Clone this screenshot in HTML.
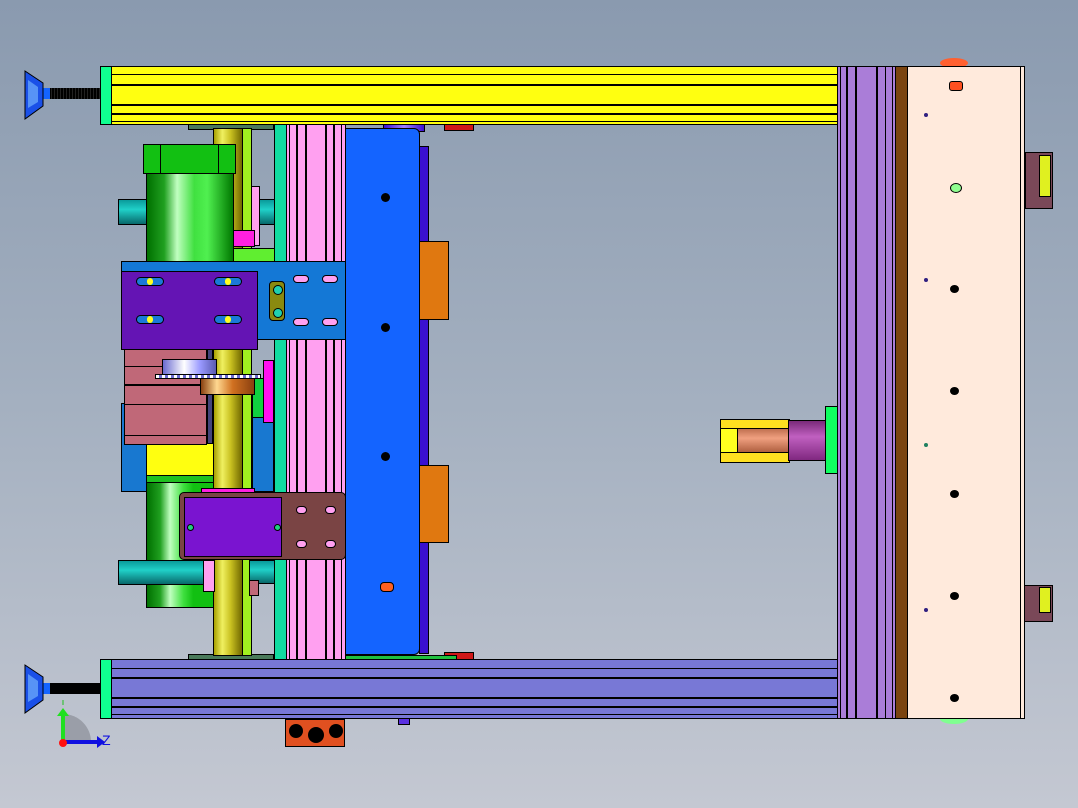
<!DOCTYPE html>
<html><head><meta charset="utf-8">
<style>
html,body{margin:0;padding:0}
body{width:1078px;height:808px;position:relative;overflow:hidden;background:linear-gradient(#8a9aaf 0%,#a4b0c0 50%,#c4c8d2 100%);font-family:"Liberation Sans",sans-serif}
.a{position:absolute;box-sizing:border-box;border:1px solid #000}
.n{position:absolute;box-sizing:border-box}
.h{position:absolute;background:#000;height:2px}
.v{position:absolute;background:#000;width:2px}
.dot{position:absolute;width:9px;height:9px;border-radius:50%;background:#000}
.slot{position:absolute;width:28px;height:9px;border-radius:5px;background:#1a7ad8;border:1px solid #000;box-sizing:border-box}
.slot::after{content:"";position:absolute;left:10px;top:0px;width:6px;height:7px;border-radius:3px;background:#ffff20}
.pslot{position:absolute;width:16px;height:8px;border-radius:4px;background:#ffa0f0;border:1px solid #000;box-sizing:border-box}
</style></head><body>

<div class="a" style="left:188px;top:124px;width:86px;height:6px;background:#4a7a5a"></div>
<div class="a" style="left:188px;top:654px;width:86px;height:6px;background:#4a7a5a"></div>
<div class="a" style="left:213px;top:128px;width:30px;height:528px;background:linear-gradient(90deg,#a8a000,#f0f060 30%,#c8c020 60%,#706800)"></div>
<div class="a" style="left:242px;top:128px;width:10px;height:528px;background:#a0f020"></div>
<div class="a" style="left:251px;top:186px;width:9px;height:60px;background:#ffa0f0"></div>
<div class="a" style="left:233px;top:230px;width:22px;height:17px;background:#ff20e0"></div>
<div class="a" style="left:233px;top:248px;width:42px;height:14px;background:#60ee30"></div>
<div class="a" style="left:259px;top:199px;width:16px;height:26px;background:linear-gradient(#0a9a9a,#20d0c8 40%,#08686a)"></div>
<div class="a" style="left:249px;top:560px;width:26px;height:24px;background:linear-gradient(#0a9a9a,#20d0c8 40%,#08686a)"></div>
<div class="a" style="left:249px;top:580px;width:10px;height:16px;background:#c06878"></div>

<div class="a" style="left:118px;top:199px;width:30px;height:26px;background:linear-gradient(#0a9a9a,#20d0c8 40%,#08686a)"></div>
<div class="a" style="left:146px;top:172px;width:88px;height:92px;background:linear-gradient(90deg,#007000,#20a020 20%,#c0ffc0 35%,#40e040 55%,#50f050 70%,#007800)"></div>
<div class="a" style="left:143px;top:144px;width:93px;height:30px;background:#12c012"></div>
<div class="v" style="left:160px;top:144px;width:1px;height:30px"></div>
<div class="v" style="left:218px;top:144px;width:1px;height:30px"></div>
<div class="a" style="left:146px;top:478px;width:68px;height:130px;background:linear-gradient(90deg,#007000,#20a020 20%,#c0ffc0 35%,#40e040 55%,#12c012 70%)"></div>
<div class="a" style="left:118px;top:560px;width:90px;height:25px;background:linear-gradient(#0a9a9a,#20d0c8 40%,#08686a)"></div>
<div class="a" style="left:203px;top:560px;width:12px;height:32px;background:#ffa0f0"></div>

<div class="a" style="left:121px;top:403px;width:26px;height:89px;background:#1878d0"></div>
<div class="a" style="left:146px;top:438px;width:68px;height:40px;background:#ffff10"></div>
<div class="a" style="left:146px;top:475px;width:68px;height:8px;background:#20c020"></div>
<div class="a" style="left:252px;top:380px;width:22px;height:112px;background:#1878d0"></div>
<div class="a" style="left:252px;top:378px;width:12px;height:40px;background:#10d040"></div>
<div class="a" style="left:124px;top:349px;width:83px;height:96px;background:#c06878"></div>
<div class="h" style="left:124px;top:366px;width:83px;height:1px"></div>
<div class="h" style="left:124px;top:384px;width:83px"></div>
<div class="h" style="left:124px;top:404px;width:83px;height:1px"></div>
<div class="h" style="left:124px;top:435px;width:83px;height:1px"></div>
<div class="a" style="left:207px;top:349px;width:6px;height:95px;background:#44447a"></div>
<div class="a" style="left:162px;top:359px;width:55px;height:18px;background:linear-gradient(90deg,#6a6ad0,#ffffff 40%,#9a9aff 70%,#5a5ab0)"></div>
<div class="a" style="left:155px;top:374px;width:106px;height:5px;background:repeating-linear-gradient(90deg,#fff 0 3px,#6a6ad0 3px 6px)"></div>
<div class="a" style="left:200px;top:378px;width:55px;height:17px;background:linear-gradient(90deg,#8a4010,#ffd890 30%,#d07020 60%,#8a4010)"></div>
<div class="a" style="left:263px;top:360px;width:11px;height:63px;background:#ff10f0"></div>

<div class="a" style="left:274px;top:124px;width:13px;height:536px;background:#12dca0"></div>
<div class="a" style="left:286px;top:124px;width:60px;height:536px;background:#ffa0f0"></div>
<div class="v" style="left:289px;top:124px;width:1px;height:536px"></div>
<div class="v" style="left:296px;top:124px;height:536px"></div>
<div class="v" style="left:305px;top:124px;height:536px"></div>
<div class="v" style="left:325px;top:124px;height:536px"></div>
<div class="v" style="left:333px;top:124px;height:536px"></div>
<div class="v" style="left:341px;top:124px;width:1px;height:536px"></div>

<div class="a" style="left:383px;top:124px;width:42px;height:8px;background:linear-gradient(90deg,#3a10d0,#a080ff,#3a10d0)"></div>
<div class="a" style="left:419px;top:146px;width:10px;height:508px;background:#3a10d0"></div>
<div class="a" style="left:345px;top:128px;width:75px;height:527px;background:#1464ff;border-radius:0 6px 6px 0"></div>
<div class="dot" style="left:381px;top:193px"></div>
<div class="dot" style="left:381px;top:323px"></div>
<div class="dot" style="left:381px;top:452px"></div>
<div style="position:absolute;left:380px;top:582px;width:12px;height:8px;border-radius:4px;background:#ff6020;border:1px solid #000"></div>
<div class="a" style="left:419px;top:241px;width:30px;height:79px;background:#e07810"></div>
<div class="a" style="left:419px;top:465px;width:30px;height:78px;background:#e07810"></div>
<div class="a" style="left:444px;top:124px;width:30px;height:7px;background:#d01818"></div>
<div class="a" style="left:444px;top:652px;width:30px;height:8px;background:#d01818"></div>
<div class="a" style="left:345px;top:655px;width:112px;height:6px;background:#20c040"></div>

<div class="a" style="left:121px;top:261px;width:225px;height:79px;background:#1478d6"></div>
<div class="a" style="left:121px;top:271px;width:137px;height:79px;background:#6414b4"></div>
<div class="slot" style="left:136px;top:277px"></div>
<div class="slot" style="left:214px;top:277px"></div>
<div class="slot" style="left:136px;top:315px"></div>
<div class="slot" style="left:214px;top:315px"></div>
<div class="a" style="left:269px;top:281px;width:16px;height:40px;background:#8a8a10;border-radius:4px"></div>
<div style="position:absolute;left:273px;top:285px;width:8px;height:8px;border-radius:50%;background:#20d0b0;border:1px solid #000"></div>
<div style="position:absolute;left:273px;top:308px;width:8px;height:8px;border-radius:50%;background:#20d0b0;border:1px solid #000"></div>
<div class="pslot" style="left:293px;top:275px"></div>
<div class="pslot" style="left:322px;top:275px"></div>
<div class="pslot" style="left:293px;top:318px"></div>
<div class="pslot" style="left:322px;top:318px"></div>

<div class="a" style="left:201px;top:488px;width:54px;height:5px;background:#ff20e0"></div>
<div class="a" style="left:179px;top:492px;width:167px;height:68px;background:#7a4444;border-radius:5px"></div>
<div class="a" style="left:184px;top:497px;width:98px;height:60px;background:#7a14d0"></div>
<div style="position:absolute;left:187px;top:524px;width:5px;height:5px;border-radius:50%;background:#20d080;border:1px solid #000"></div>
<div style="position:absolute;left:274px;top:524px;width:5px;height:5px;border-radius:50%;background:#20d080;border:1px solid #000"></div>
<div class="pslot" style="left:296px;top:506px;width:11px"></div>
<div class="pslot" style="left:325px;top:506px;width:11px"></div>
<div class="pslot" style="left:296px;top:540px;width:11px"></div>
<div class="pslot" style="left:325px;top:540px;width:11px"></div>

<div class="a" style="left:720px;top:419px;width:70px;height:44px;background:#ffe020"></div>
<div class="a" style="left:720px;top:428px;width:18px;height:25px;background:#ffff20"></div>
<div class="a" style="left:737px;top:428px;width:52px;height:25px;background:linear-gradient(#c07050,#f0a080 40%,#b06040)"></div>
<div class="a" style="left:788px;top:420px;width:38px;height:41px;background:linear-gradient(#7a2a7a,#c060c0 40%,#802880)"></div>
<div class="a" style="left:825px;top:406px;width:13px;height:68px;background:#10ff60"></div>

<div class="a" style="left:100px;top:66px;width:738px;height:59px;background:#ffff10"></div>
<div class="h" style="left:111px;top:74px;width:726px;height:1px"></div>
<div class="h" style="left:111px;top:84px;width:726px"></div>
<div class="h" style="left:111px;top:104px;width:726px"></div>
<div class="h" style="left:111px;top:113px;width:726px"></div>
<div class="h" style="left:111px;top:121px;width:726px;height:1px"></div>
<div class="a" style="left:100px;top:66px;width:12px;height:59px;background:#10ff90"></div>

<div class="a" style="left:100px;top:659px;width:738px;height:60px;background:#7878d6"></div>
<div class="h" style="left:111px;top:668px;width:726px;height:1px"></div>
<div class="h" style="left:111px;top:677px;width:726px"></div>
<div class="h" style="left:111px;top:697px;width:726px"></div>
<div class="h" style="left:111px;top:706px;width:726px"></div>
<div class="h" style="left:111px;top:714px;width:726px;height:1px"></div>
<div class="a" style="left:100px;top:659px;width:12px;height:60px;background:#10ff90"></div>
<div class="a" style="left:398px;top:718px;width:12px;height:7px;background:#5a30e0"></div>

<div class="a" style="left:285px;top:719px;width:60px;height:28px;background:#e05020"></div>
<div style="position:absolute;left:289px;top:724px;width:14px;height:14px;border-radius:50%;background:#000"></div>
<div style="position:absolute;left:308px;top:727px;width:16px;height:16px;border-radius:50%;background:#000"></div>
<div style="position:absolute;left:329px;top:724px;width:14px;height:14px;border-radius:50%;background:#000"></div>

<div class="n" style="left:43px;top:88px;width:58px;height:11px;background:repeating-linear-gradient(90deg,#000 0 2px,#222 2px 3px)"></div>
<div class="n" style="left:43px;top:88px;width:7px;height:11px;background:#1464ff"></div>
<svg style="position:absolute;left:24px;top:70px" width="20" height="50"><polygon points="1,1 19,13 19,36 1,49" fill="#1a50e8" stroke="#000"/><polygon points="4,10 14,17 14,32 4,38" fill="#80c0ff" opacity=".6"/></svg>
<div class="n" style="left:43px;top:683px;width:58px;height:11px;background:#000"></div>
<div class="n" style="left:43px;top:683px;width:7px;height:11px;background:#1464ff"></div>
<svg style="position:absolute;left:24px;top:664px" width="20" height="50"><polygon points="1,1 19,13 19,36 1,49" fill="#1a50e8" stroke="#000"/><polygon points="4,10 14,17 14,32 4,38" fill="#80c0ff" opacity=".6"/></svg>

<div class="a" style="left:837px;top:66px;width:59px;height:653px;background:#aa7dd8"></div>
<div class="v" style="left:840px;top:66px;width:1px;height:653px"></div>
<div class="v" style="left:846px;top:66px;height:653px"></div>
<div class="v" style="left:855px;top:66px;height:653px"></div>
<div class="v" style="left:876px;top:66px;height:653px"></div>
<div class="v" style="left:885px;top:66px;width:1px;height:653px"></div>
<div class="v" style="left:892px;top:66px;width:1px;height:653px"></div>
<div class="a" style="left:895px;top:66px;width:13px;height:653px;background:#7a4410"></div>

<div style="position:absolute;left:940px;top:58px;width:28px;height:10px;border-radius:50%;background:#ff6030"></div>
<div style="position:absolute;left:940px;top:714px;width:28px;height:10px;border-radius:50%;background:#80ff90"></div>
<div class="a" style="left:907px;top:66px;width:118px;height:653px;background:#ffeadc"></div>
<div class="v" style="left:1020px;top:66px;width:1px;height:653px"></div>
<div style="position:absolute;left:949px;top:81px;width:12px;height:8px;border-radius:3px;background:#ff5020;border:1px solid #000"></div>
<div style="position:absolute;left:950px;top:183px;width:10px;height:8px;border-radius:50%;background:#90ff90;border:1px solid #000"></div>
<div class="dot" style="left:950px;top:285px;height:8px"></div>
<div class="dot" style="left:950px;top:387px;height:8px"></div>
<div class="dot" style="left:950px;top:490px;height:8px"></div>
<div class="dot" style="left:950px;top:592px;height:8px"></div>
<div class="dot" style="left:950px;top:694px;height:8px"></div>
<div style="position:absolute;left:924px;top:113px;width:4px;height:4px;border-radius:50%;background:#302080"></div>
<div style="position:absolute;left:924px;top:278px;width:4px;height:4px;border-radius:50%;background:#302080"></div>
<div style="position:absolute;left:924px;top:443px;width:4px;height:4px;border-radius:50%;background:#208060"></div>
<div style="position:absolute;left:924px;top:608px;width:4px;height:4px;border-radius:50%;background:#302080"></div>

<div class="a" style="left:1025px;top:152px;width:28px;height:57px;background:#7a4858"></div>
<div class="a" style="left:1039px;top:155px;width:12px;height:42px;background:#e0f020"></div>
<div class="a" style="left:1024px;top:585px;width:29px;height:37px;background:#7a4858"></div>
<div class="a" style="left:1039px;top:587px;width:12px;height:26px;background:#e0f020"></div>

<svg style="position:absolute;left:55px;top:700px" width="60" height="55">
<path d="M8,14 A28,28 0 0 1 36,42 L8,42 Z" fill="#9a9ea8"/>
<line x1="8" y1="5" x2="8" y2="0" stroke="#20c020"/>
<rect x="6" y="14" width="4" height="28" fill="#20e020"/>
<polygon points="2,16 8,8 14,16" fill="#20e020"/>
<rect x="8" y="40" width="36" height="4" fill="#1010e0"/>
<polygon points="42,36 50,42 42,48" fill="#1010e0"/>
<circle cx="8" cy="43" r="4" fill="#ff1010"/>
<text x="47" y="45" font-family="Liberation Sans" font-size="14" fill="#1010e0">Z</text>
</svg>
</body></html>
